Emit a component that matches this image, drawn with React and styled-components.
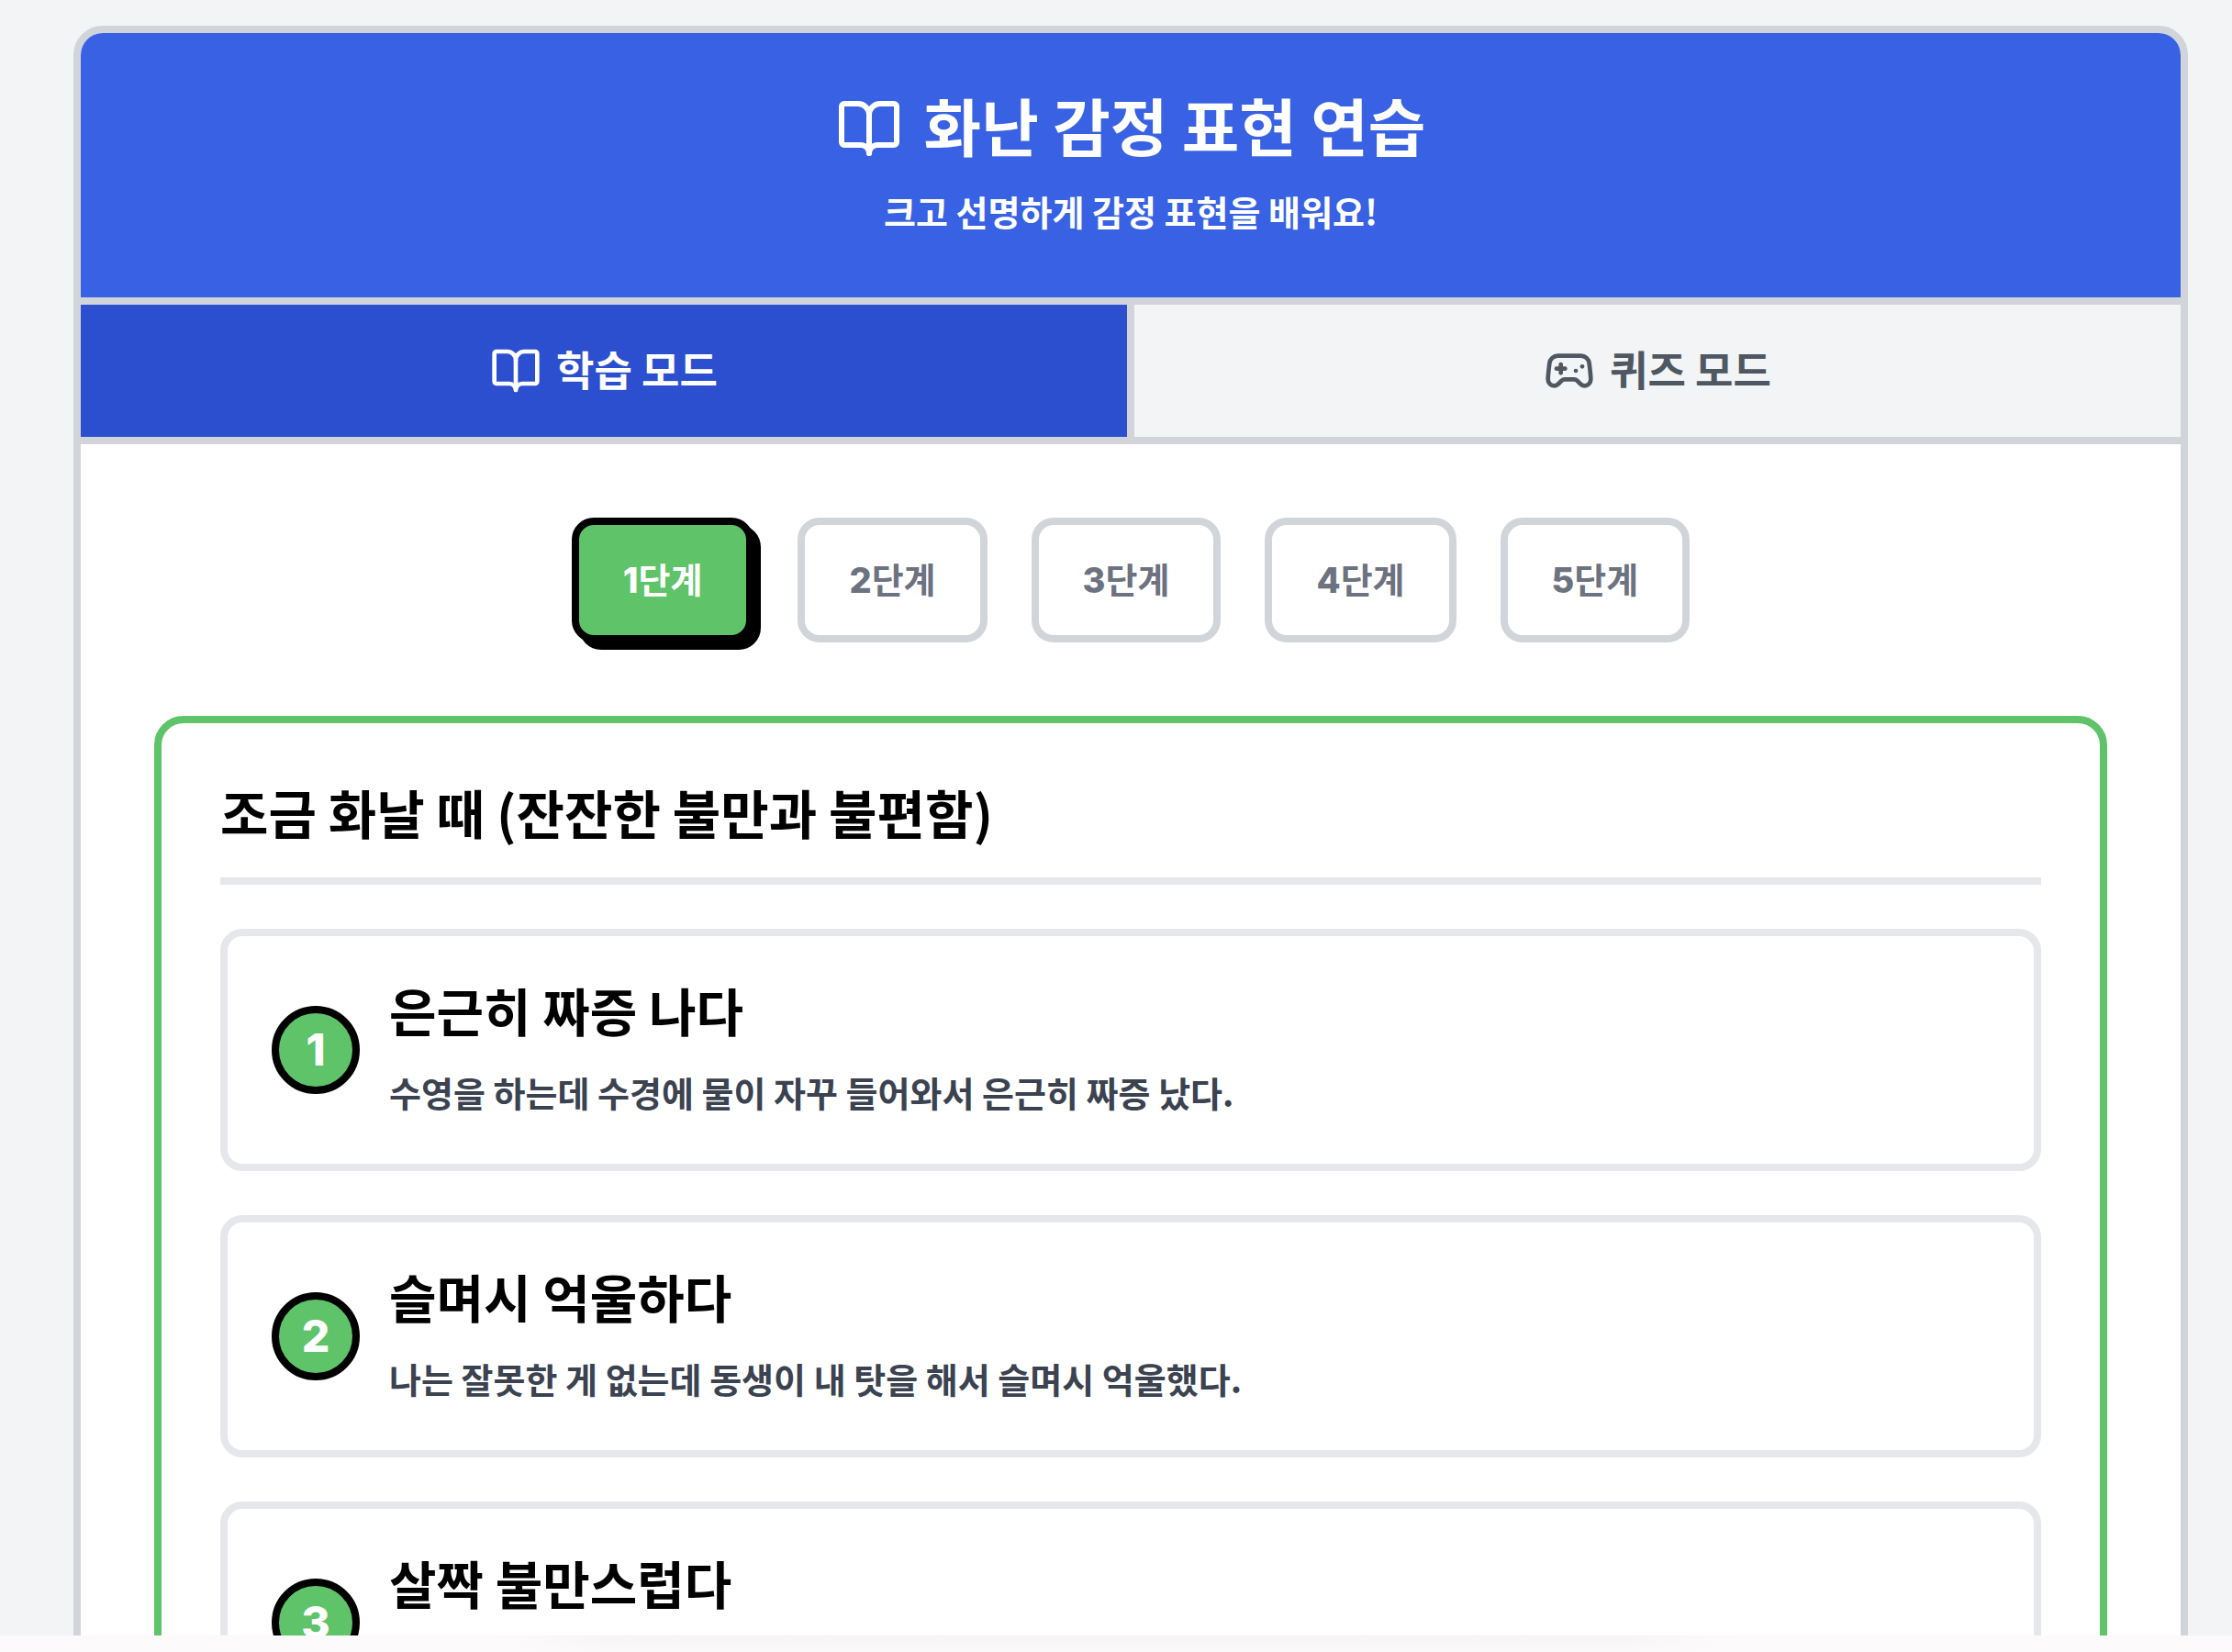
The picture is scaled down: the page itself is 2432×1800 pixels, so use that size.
import { useState } from 'react'
import styled, { createGlobalStyle } from 'styled-components'
import { BookOpen, Gamepad2 } from 'lucide-react'

const GlobalStyle = createGlobalStyle`
  *, *::before, *::after {
    box-sizing: border-box;
  }

  body {
    margin: 0;
    background: #f2f4f6;
    font-family: "Noto Sans CJK KR", "Noto Sans", sans-serif;
    color: #000;
  }

  h1, h2, h3, p, ol {
    margin: 0;
    padding: 0;
  }

  button {
    font-family: inherit;
    cursor: pointer;
  }
`

const Page = styled.div`
  display: flex;
  flex-direction: column;
  height: 100vh;
`

const Content = styled.main`
  flex: 1;
  min-height: 0;
  padding: 28px 48px 0 80px;
  overflow-y: auto;
  scrollbar-width: none;
`

const Card = styled.div`
  background: #fff;
  border: 8px solid #d1d5da;
  border-radius: 32px;
  overflow: hidden;
`

const Header = styled.header`
  display: flex;
  flex-direction: column;
  align-items: center;
  gap: 24px;
  padding: 64px;
  background: #3862e3;
  border-bottom: 8px solid #d1d5da;
  color: #fff;
`

const Title = styled.h1`
  display: flex;
  align-items: center;
  gap: 24px;
  font-size: 68px;
  line-height: 72px;
  font-weight: 700;

  span {
    padding-bottom: 8px;
  }
`

const Subtitle = styled.p`
  padding-bottom: 4px;
  font-size: 38px;
  line-height: 52px;
  font-weight: 700;
`

const Tabs = styled.nav`
  display: flex;
  border-bottom: 8px solid #d1d5da;
`

const Tab = styled.button`
  display: flex;
  flex: 1;
  align-items: center;
  justify-content: center;
  gap: 16px;
  padding: 40px 0;
  border: 0 solid #d1d5da;
  background: ${({ $active }) => ($active ? '#2b4fcf' : '#f2f4f6')};
  color: ${({ $active }) => ($active ? '#fff' : '#4f5763')};
  font-size: 45px;
  line-height: 60px;
  font-weight: 700;

  &:not(:last-child) {
    border-right-width: 8px;
  }

  span {
    padding-bottom: 4px;
  }
`

const Body = styled.div`
  display: flex;
  flex-direction: column;
  gap: 80px;
  padding: 80px;
`

const Steps = styled.div`
  display: flex;
  flex-wrap: wrap;
  justify-content: center;
  gap: 48px;
`

const Step = styled.button`
  padding: 32px 48px;
  border: 8px solid ${({ $active }) => ($active ? '#000' : '#d1d5da')};
  border-radius: 24px;
  background: ${({ $active }) => ($active ? '#5fc369' : '#fff')};
  color: ${({ $active }) => ($active ? '#fff' : '#6d7280')};
  box-shadow: ${({ $active }) => ($active ? '8px 8px 0 #000' : 'none')};
  font-family: Inter, "Noto Sans CJK KR", sans-serif;
  font-size: 38px;
  line-height: 56px;
  font-weight: 700;

  b {
    font-weight: 800;
  }
`

const Panel = styled.section`
  padding: 64px;
  border: 8px solid #5fc369;
  border-radius: 32px;
`

const PanelTitle = styled.h2`
  padding-bottom: 40px;
  margin-bottom: 48px;
  border-bottom: 8px solid #e5e7ea;
  font-size: 57px;
  line-height: 64px;
  font-weight: 700;
`

const List = styled.ol`
  display: flex;
  flex-direction: column;
  gap: 48px;
  list-style: none;
`

const Item = styled.li`
  display: flex;
  align-items: center;
  gap: 32px;
  padding: 48px;
  border: 8px solid #e5e7ea;
  border-radius: 24px;
`

const Badge = styled.span`
  display: flex;
  flex-shrink: 0;
  align-items: center;
  justify-content: center;
  width: 96px;
  height: 96px;
  border: 8px solid #000;
  border-radius: 50%;
  background: #5fc369;
  color: #fff;
  font-family: Inter, sans-serif;
  font-size: 48px;
  line-height: 64px;
  font-weight: 800;
`

const Expression = styled.h3`
  margin-bottom: 32px;
  font-size: 56px;
  line-height: 64px;
  font-weight: 700;
`

const Example = styled.p`
  min-height: 56px;
  padding-bottom: 4px;
  color: #3b4250;
  font-size: 38px;
  line-height: 52px;
  font-weight: 700;
`

const BottomBar = styled.footer`
  display: flex;
  justify-content: center;
  height: 18px;
  background: #fcfafb;
`

const BarShade = styled.div`
  width: 56%;
  background: linear-gradient(90deg, #fcfafb, transparent 10%, transparent 90%, #fcfafb),
    linear-gradient(#f6f4f5, #faf8f9);
`

const steps = [1, 2, 3, 4, 5]

const expressions = [
  {
    title: '은근히 짜증 나다',
    example: '수영을 하는데 수경에 물이 자꾸 들어와서 은근히 짜증 났다.',
  },
  {
    title: '슬며시 억울하다',
    example: '나는 잘못한 게 없는데 동생이 내 탓을 해서 슬며시 억울했다.',
  },
  { title: '살짝 불만스럽다' },
]

function App() {
  const [mode, setMode] = useState('learn')
  const [step, setStep] = useState(1)

  return (
    <>
      <GlobalStyle />
      <Page>
        <Content>
          <Card>
            <Header>
              <Title>
                <BookOpen size={72} />
                <span>화난 감정 표현 연습</span>
              </Title>
              <Subtitle>크고 선명하게 감정 표현을 배워요!</Subtitle>
            </Header>
            <Tabs>
              <Tab $active={mode === 'learn'} onClick={() => setMode('learn')}>
                <BookOpen size={56} />
                <span>학습 모드</span>
              </Tab>
              <Tab $active={mode === 'quiz'} onClick={() => setMode('quiz')}>
                <Gamepad2 size={56} />
                <span>퀴즈 모드</span>
              </Tab>
            </Tabs>
            <Body>
              <Steps>
                {steps.map((n) => (
                  <Step key={n} $active={n === step} onClick={() => setStep(n)}>
                    <b>{n}</b>단계
                  </Step>
                ))}
              </Steps>
              <Panel>
                <PanelTitle>조금 화날 때 (잔잔한 불만과 불편함)</PanelTitle>
                <List>
                  {expressions.map(({ title, example }, i) => (
                    <Item key={title}>
                      <Badge>{i + 1}</Badge>
                      <div>
                        <Expression>{title}</Expression>
                        <Example>{example}</Example>
                      </div>
                    </Item>
                  ))}
                </List>
              </Panel>
            </Body>
          </Card>
        </Content>
        <BottomBar>
          <BarShade />
        </BottomBar>
      </Page>
    </>
  )
}

export default App
